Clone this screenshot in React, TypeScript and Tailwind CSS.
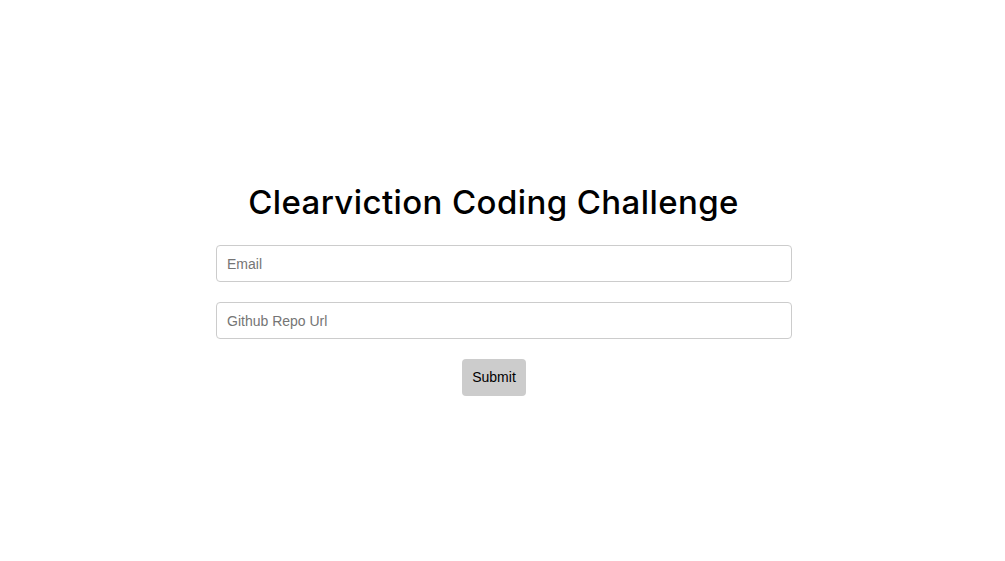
export default function App() {
  return (
    <div className="min-h-[561px] w-full bg-white font-['Liberation_Sans',Arial,sans-serif]">
      <div className="ml-[216px] w-[576px] pt-[180px] flex flex-col">
        <h1 className="pr-[21px] text-center text-[33px] leading-[44px] font-medium text-black font-['Inter','Noto_Sans',sans-serif] tracking-[0.4px]">
          Clearviction Coding Challenge
        </h1>
        <div className="mt-[21px] flex flex-col gap-[20px]">
          <input
            type="email"
            placeholder="Email"
            className="h-[37px] w-full rounded-[4px] border border-[#cccccc] px-[10px] text-[14px] text-black placeholder:text-[#757575] outline-none"
          />
          <input
            type="text"
            placeholder="Github Repo Url"
            className="h-[37px] w-full rounded-[4px] border border-[#cccccc] px-[10px] text-[14px] text-black placeholder:text-[#757575] outline-none"
          />
        </div>
        <div className="mt-[20px] flex justify-center pr-[20px]">
          <button className="h-[37px] w-[64px] rounded-[4px] bg-[#cccccc] text-[14px] text-black">
            Submit
          </button>
        </div>
      </div>
    </div>
  );
}
